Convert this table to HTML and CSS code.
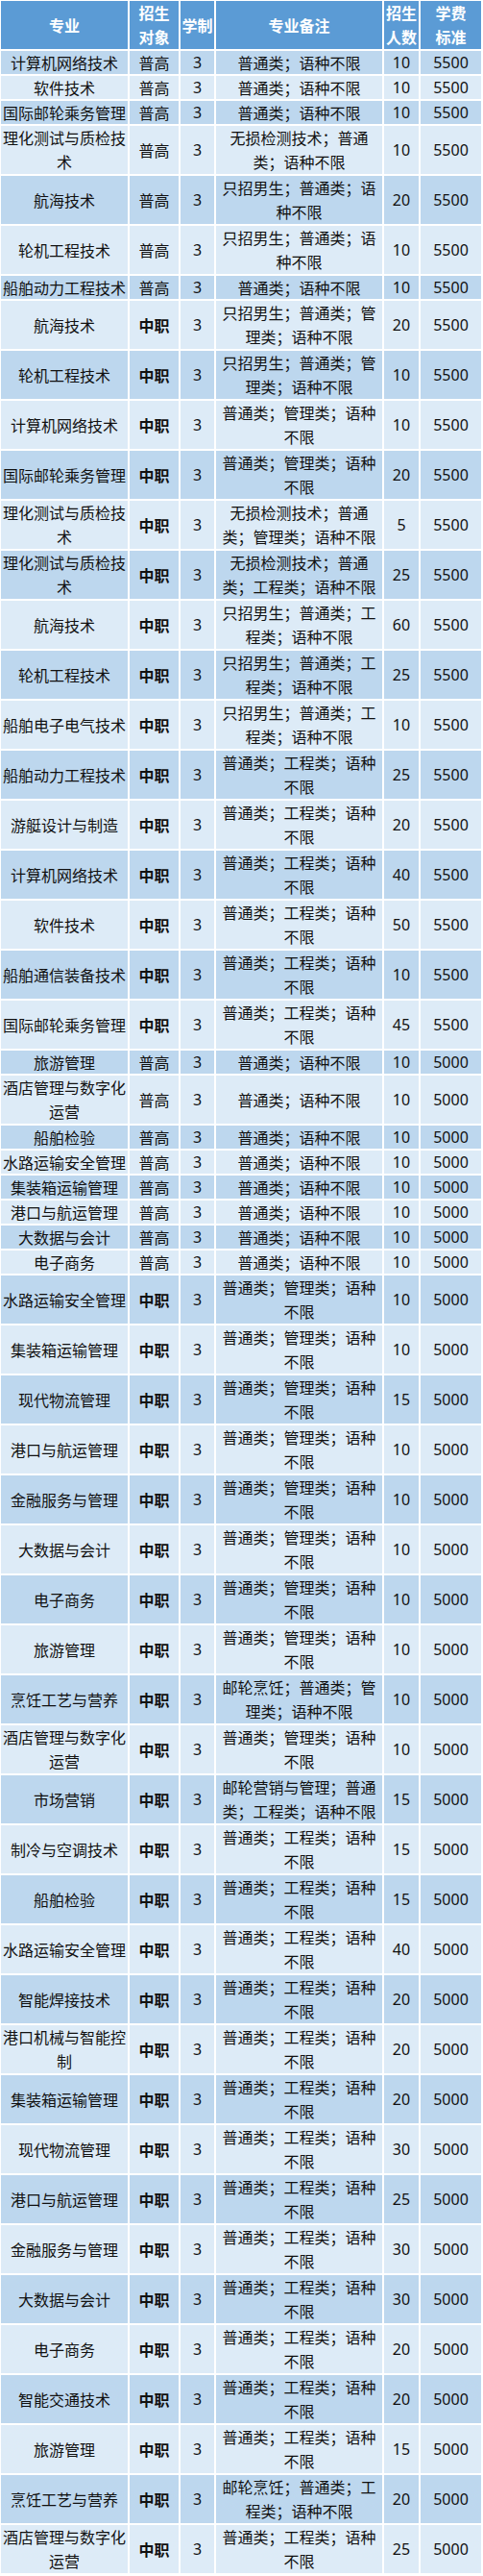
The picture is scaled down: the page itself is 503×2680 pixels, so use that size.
FILE: index.html
```html
<!DOCTYPE html>
<html lang="zh-CN">
<head>
<meta charset="utf-8">
<title>招生计划</title>
<link rel="stylesheet" href="styles.css">
</head>
<body>
<table class="plan">
<colgroup>
<col class="c-major"><col class="c-target"><col class="c-years"><col class="c-note"><col class="c-count"><col class="c-fee">
</colgroup>
<thead>
<tr><th>专业</th><th>招生<br>对象</th><th>学制</th><th>专业备注</th><th>招生<br>人数</th><th>学费<br>标准</th></tr>
</thead>
<tbody>
<tr class="s"><td class="m">计算机网络技术</td><td>普高</td><td class="n">3</td><td>普通类；语种不限</td><td class="n">10</td><td class="n">5500</td></tr>
<tr class="s"><td class="m">软件技术</td><td>普高</td><td class="n">3</td><td>普通类；语种不限</td><td class="n">10</td><td class="n">5500</td></tr>
<tr class="s"><td class="m">国际邮轮乘务管理</td><td>普高</td><td class="n">3</td><td>普通类；语种不限</td><td class="n">10</td><td class="n">5500</td></tr>
<tr><td class="m">理化测试与质检技术</td><td>普高</td><td class="n">3</td><td>无损检测技术；普通类；语种不限</td><td class="n">10</td><td class="n">5500</td></tr>
<tr><td class="m">航海技术</td><td>普高</td><td class="n">3</td><td>只招男生；普通类；语种不限</td><td class="n">20</td><td class="n">5500</td></tr>
<tr><td class="m">轮机工程技术</td><td>普高</td><td class="n">3</td><td>只招男生；普通类；语种不限</td><td class="n">10</td><td class="n">5500</td></tr>
<tr class="s"><td class="m">船舶动力工程技术</td><td>普高</td><td class="n">3</td><td>普通类；语种不限</td><td class="n">10</td><td class="n">5500</td></tr>
<tr><td class="m">航海技术</td><td class="b">中职</td><td class="n">3</td><td>只招男生；普通类；管理类；语种不限</td><td class="n">20</td><td class="n">5500</td></tr>
<tr><td class="m">轮机工程技术</td><td class="b">中职</td><td class="n">3</td><td>只招男生；普通类；管理类；语种不限</td><td class="n">10</td><td class="n">5500</td></tr>
<tr><td class="m">计算机网络技术</td><td class="b">中职</td><td class="n">3</td><td>普通类；管理类；语种不限</td><td class="n">10</td><td class="n">5500</td></tr>
<tr><td class="m">国际邮轮乘务管理</td><td class="b">中职</td><td class="n">3</td><td>普通类；管理类；语种不限</td><td class="n">20</td><td class="n">5500</td></tr>
<tr><td class="m">理化测试与质检技术</td><td class="b">中职</td><td class="n">3</td><td>无损检测技术；普通类；管理类；语种不限</td><td class="n">5</td><td class="n">5500</td></tr>
<tr><td class="m">理化测试与质检技术</td><td class="b">中职</td><td class="n">3</td><td>无损检测技术；普通类；工程类；语种不限</td><td class="n">25</td><td class="n">5500</td></tr>
<tr><td class="m">航海技术</td><td class="b">中职</td><td class="n">3</td><td>只招男生；普通类；工程类；语种不限</td><td class="n">60</td><td class="n">5500</td></tr>
<tr><td class="m">轮机工程技术</td><td class="b">中职</td><td class="n">3</td><td>只招男生；普通类；工程类；语种不限</td><td class="n">25</td><td class="n">5500</td></tr>
<tr><td class="m">船舶电子电气技术</td><td class="b">中职</td><td class="n">3</td><td>只招男生；普通类；工程类；语种不限</td><td class="n">10</td><td class="n">5500</td></tr>
<tr><td class="m">船舶动力工程技术</td><td class="b">中职</td><td class="n">3</td><td>普通类；工程类；语种不限</td><td class="n">25</td><td class="n">5500</td></tr>
<tr><td class="m">游艇设计与制造</td><td class="b">中职</td><td class="n">3</td><td>普通类；工程类；语种不限</td><td class="n">20</td><td class="n">5500</td></tr>
<tr><td class="m">计算机网络技术</td><td class="b">中职</td><td class="n">3</td><td>普通类；工程类；语种不限</td><td class="n">40</td><td class="n">5500</td></tr>
<tr><td class="m">软件技术</td><td class="b">中职</td><td class="n">3</td><td>普通类；工程类；语种不限</td><td class="n">50</td><td class="n">5500</td></tr>
<tr><td class="m">船舶通信装备技术</td><td class="b">中职</td><td class="n">3</td><td>普通类；工程类；语种不限</td><td class="n">10</td><td class="n">5500</td></tr>
<tr><td class="m">国际邮轮乘务管理</td><td class="b">中职</td><td class="n">3</td><td>普通类；工程类；语种不限</td><td class="n">45</td><td class="n">5500</td></tr>
<tr class="s"><td class="m">旅游管理</td><td>普高</td><td class="n">3</td><td>普通类；语种不限</td><td class="n">10</td><td class="n">5000</td></tr>
<tr><td class="m">酒店管理与数字化运营</td><td>普高</td><td class="n">3</td><td>普通类；语种不限</td><td class="n">10</td><td class="n">5000</td></tr>
<tr class="s"><td class="m">船舶检验</td><td>普高</td><td class="n">3</td><td>普通类；语种不限</td><td class="n">10</td><td class="n">5000</td></tr>
<tr class="s"><td class="m">水路运输安全管理</td><td>普高</td><td class="n">3</td><td>普通类；语种不限</td><td class="n">10</td><td class="n">5000</td></tr>
<tr class="s"><td class="m">集装箱运输管理</td><td>普高</td><td class="n">3</td><td>普通类；语种不限</td><td class="n">10</td><td class="n">5000</td></tr>
<tr class="s"><td class="m">港口与航运管理</td><td>普高</td><td class="n">3</td><td>普通类；语种不限</td><td class="n">10</td><td class="n">5000</td></tr>
<tr class="s"><td class="m">大数据与会计</td><td>普高</td><td class="n">3</td><td>普通类；语种不限</td><td class="n">10</td><td class="n">5000</td></tr>
<tr class="s"><td class="m">电子商务</td><td>普高</td><td class="n">3</td><td>普通类；语种不限</td><td class="n">10</td><td class="n">5000</td></tr>
<tr><td class="m">水路运输安全管理</td><td class="b">中职</td><td class="n">3</td><td>普通类；管理类；语种不限</td><td class="n">10</td><td class="n">5000</td></tr>
<tr><td class="m">集装箱运输管理</td><td class="b">中职</td><td class="n">3</td><td>普通类；管理类；语种不限</td><td class="n">10</td><td class="n">5000</td></tr>
<tr><td class="m">现代物流管理</td><td class="b">中职</td><td class="n">3</td><td>普通类；管理类；语种不限</td><td class="n">15</td><td class="n">5000</td></tr>
<tr><td class="m">港口与航运管理</td><td class="b">中职</td><td class="n">3</td><td>普通类；管理类；语种不限</td><td class="n">10</td><td class="n">5000</td></tr>
<tr><td class="m">金融服务与管理</td><td class="b">中职</td><td class="n">3</td><td>普通类；管理类；语种不限</td><td class="n">10</td><td class="n">5000</td></tr>
<tr><td class="m">大数据与会计</td><td class="b">中职</td><td class="n">3</td><td>普通类；管理类；语种不限</td><td class="n">10</td><td class="n">5000</td></tr>
<tr><td class="m">电子商务</td><td class="b">中职</td><td class="n">3</td><td>普通类；管理类；语种不限</td><td class="n">10</td><td class="n">5000</td></tr>
<tr><td class="m">旅游管理</td><td class="b">中职</td><td class="n">3</td><td>普通类；管理类；语种不限</td><td class="n">10</td><td class="n">5000</td></tr>
<tr><td class="m">烹饪工艺与营养</td><td class="b">中职</td><td class="n">3</td><td>邮轮烹饪；普通类；管理类；语种不限</td><td class="n">10</td><td class="n">5000</td></tr>
<tr><td class="m">酒店管理与数字化运营</td><td class="b">中职</td><td class="n">3</td><td>普通类；管理类；语种不限</td><td class="n">10</td><td class="n">5000</td></tr>
<tr><td class="m">市场营销</td><td class="b">中职</td><td class="n">3</td><td>邮轮营销与管理；普通类；工程类；语种不限</td><td class="n">15</td><td class="n">5000</td></tr>
<tr><td class="m">制冷与空调技术</td><td class="b">中职</td><td class="n">3</td><td>普通类；工程类；语种不限</td><td class="n">15</td><td class="n">5000</td></tr>
<tr><td class="m">船舶检验</td><td class="b">中职</td><td class="n">3</td><td>普通类；工程类；语种不限</td><td class="n">15</td><td class="n">5000</td></tr>
<tr><td class="m">水路运输安全管理</td><td class="b">中职</td><td class="n">3</td><td>普通类；工程类；语种不限</td><td class="n">40</td><td class="n">5000</td></tr>
<tr><td class="m">智能焊接技术</td><td class="b">中职</td><td class="n">3</td><td>普通类；工程类；语种不限</td><td class="n">20</td><td class="n">5000</td></tr>
<tr><td class="m">港口机械与智能控制</td><td class="b">中职</td><td class="n">3</td><td>普通类；工程类；语种不限</td><td class="n">20</td><td class="n">5000</td></tr>
<tr><td class="m">集装箱运输管理</td><td class="b">中职</td><td class="n">3</td><td>普通类；工程类；语种不限</td><td class="n">20</td><td class="n">5000</td></tr>
<tr><td class="m">现代物流管理</td><td class="b">中职</td><td class="n">3</td><td>普通类；工程类；语种不限</td><td class="n">30</td><td class="n">5000</td></tr>
<tr><td class="m">港口与航运管理</td><td class="b">中职</td><td class="n">3</td><td>普通类；工程类；语种不限</td><td class="n">25</td><td class="n">5000</td></tr>
<tr><td class="m">金融服务与管理</td><td class="b">中职</td><td class="n">3</td><td>普通类；工程类；语种不限</td><td class="n">30</td><td class="n">5000</td></tr>
<tr><td class="m">大数据与会计</td><td class="b">中职</td><td class="n">3</td><td>普通类；工程类；语种不限</td><td class="n">30</td><td class="n">5000</td></tr>
<tr><td class="m">电子商务</td><td class="b">中职</td><td class="n">3</td><td>普通类；工程类；语种不限</td><td class="n">20</td><td class="n">5000</td></tr>
<tr><td class="m">智能交通技术</td><td class="b">中职</td><td class="n">3</td><td>普通类；工程类；语种不限</td><td class="n">20</td><td class="n">5000</td></tr>
<tr><td class="m">旅游管理</td><td class="b">中职</td><td class="n">3</td><td>普通类；工程类；语种不限</td><td class="n">15</td><td class="n">5000</td></tr>
<tr><td class="m">烹饪工艺与营养</td><td class="b">中职</td><td class="n">3</td><td>邮轮烹饪；普通类；工程类；语种不限</td><td class="n">20</td><td class="n">5000</td></tr>
<tr><td class="m">酒店管理与数字化运营</td><td class="b">中职</td><td class="n">3</td><td>普通类；工程类；语种不限</td><td class="n">25</td><td class="n">5000</td></tr>
</tbody>
</table>
</body>
</html>
```
FILE: styles.css
```css
html, body {
  margin: 0;
  padding: 0;
  background: #ffffff;
}

body {
  font-family: "Noto Sans CJK SC", "Noto Sans", sans-serif;
  font-size: 16px;
  color: #111111;
  overflow-x: hidden;
}

.plan {
  border-collapse: separate;
  border-spacing: 2px;
  table-layout: fixed;
  width: 504px;
  margin: -1px 0 0 -1px;
}

.c-major { width: 132px; }
.c-target { width: 51px; }
.c-years { width: 35px; }
.c-note { width: 173px; }
.c-count { width: 36px; }
.c-fee { width: 63px; }

.plan th,
.plan td {
  padding: 0;
  text-align: center;
  vertical-align: middle;
  line-height: 25px;
}

.plan th {
  background: #5b9bd5;
  color: #ffffff;
  font-weight: 700;
}

.plan tbody tr:nth-child(odd) td {
  background: #bdd7ee;
}

.plan tbody tr:nth-child(even) td {
  background: #ddebf7;
}

.plan tr.s td {
  line-height: 24px;
}

.plan td.n {
  font-family: "Noto Sans", "Noto Sans CJK SC", sans-serif;
}

.plan td.b {
  font-weight: 700;
}
```
